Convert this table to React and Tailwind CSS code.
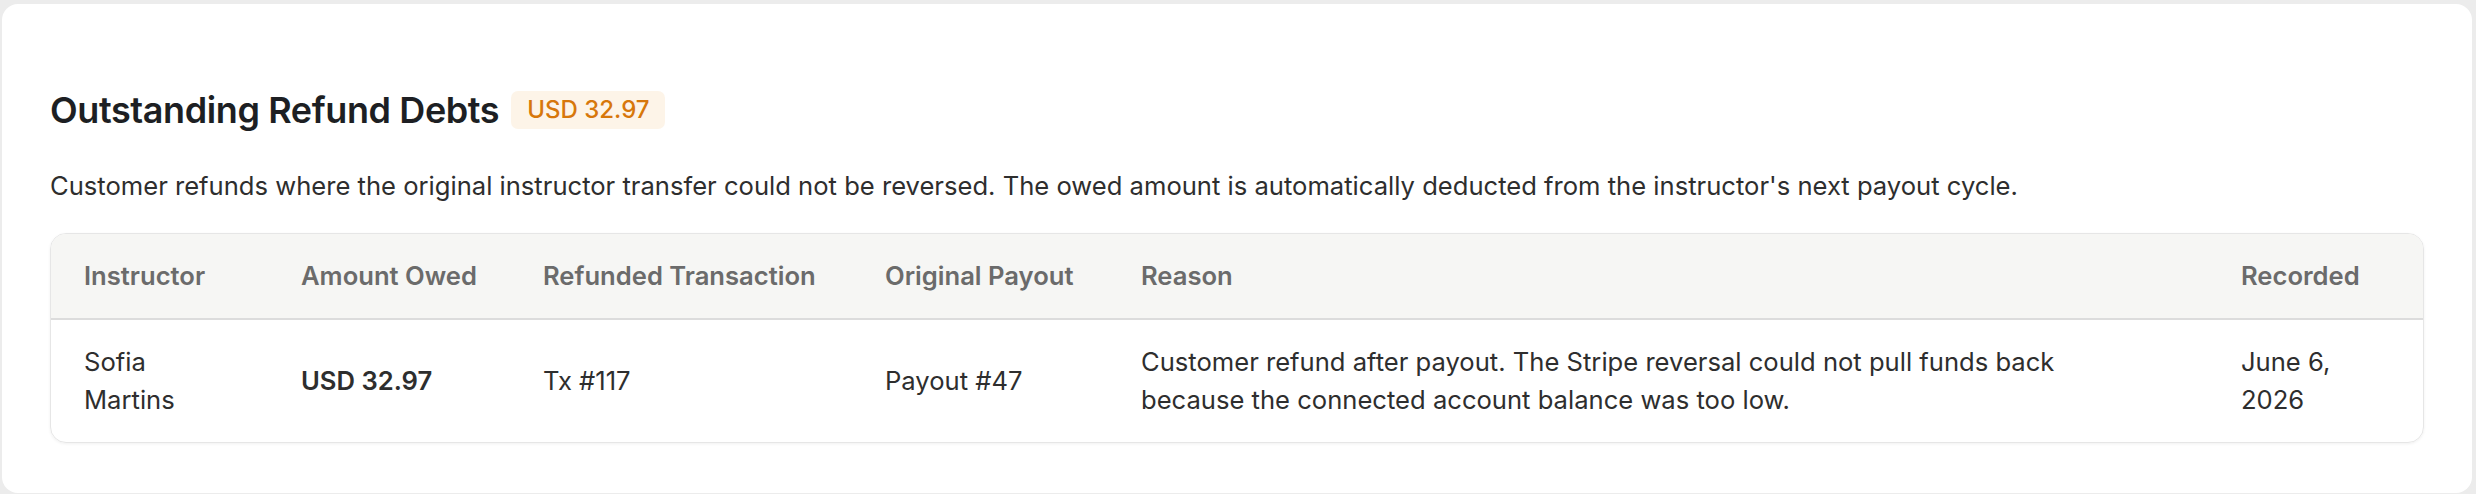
const rows = [
  {
    instructor: 'Sofia Martins',
    amount: 'USD 32.97',
    tx: 'Tx #117',
    payout: 'Payout #47',
    reason:
      'Customer refund after payout. The Stripe reversal could not pull funds back because the connected account balance was too low.',
    recorded: 'June 6, 2026',
  },
]

const headers = ['Instructor', 'Amount Owed', 'Refunded Transaction', 'Original Payout', 'Reason', 'Recorded']

const App = () => {
  return (
    <div className="min-h-screen bg-[#ececec] pt-[4px] pl-[2px] pr-[4px] pb-[4px] font-['Inter',sans-serif]">
      <section className="rounded-[16px] bg-white px-12 pt-[84px] pb-[50px]">
        <div className="flex items-center gap-[12px]">
          <h2 className="text-[36px] leading-[44px] font-semibold tracking-[-0.4px] text-[#1d1f23]">
            Outstanding Refund Debts
          </h2>
          <span className="rounded-[7px] bg-[#fdf4e8] px-[16px] py-[4px] text-[24px] leading-[30px] font-medium text-[#d7770b]">
            USD 32.97
          </span>
        </div>
        <p className="mt-[35px] text-[25.6px] leading-[38px] text-[#2e2e2e]">
          Customer refunds where the original instructor transfer could not be
          reversed. The owed amount is automatically deducted from the
          instructor's next payout cycle.
        </p>
        <div className="mt-[28px] overflow-hidden rounded-[16px] border border-[#e6e6e6] shadow-[0_1px_3px_rgba(0,0,0,0.06)]">
          <table className="w-full table-fixed border-collapse text-left">
            <colgroup>
              <col className="w-[217px]" />
              <col className="w-[242px]" />
              <col className="w-[342px]" />
              <col className="w-[256px]" />
              <col />
              <col className="w-[215px]" />
            </colgroup>
            <thead className="bg-[#f6f6f4]">
              <tr className="border-b-2 border-[#dcdcdc]">
                {headers.map((h) => (
                  <th
                    key={h}
                    className="px-[33px] py-[23px] text-[25.6px] leading-[38px] font-semibold text-[#6b6b6b]"
                  >
                    {h}
                  </th>
                ))}
              </tr>
            </thead>
            <tbody className="text-[25.6px] leading-[38px] text-[#2e2e2e]">
              {rows.map((r) => (
                <tr key={r.tx}>
                  <td className="px-[33px] py-[23px] align-middle">{r.instructor}</td>
                  <td className="px-[33px] py-[23px] align-middle font-semibold">{r.amount}</td>
                  <td className="px-[33px] py-[23px] align-middle">{r.tx}</td>
                  <td className="px-[33px] py-[23px] align-middle">{r.payout}</td>
                  <td className="pl-[33px] pr-[70px] py-[23px] align-middle">{r.reason}</td>
                  <td className="px-[33px] py-[23px] align-middle">{r.recorded}</td>
                </tr>
              ))}
            </tbody>
          </table>
        </div>
      </section>
    </div>
  )
}

export default App
